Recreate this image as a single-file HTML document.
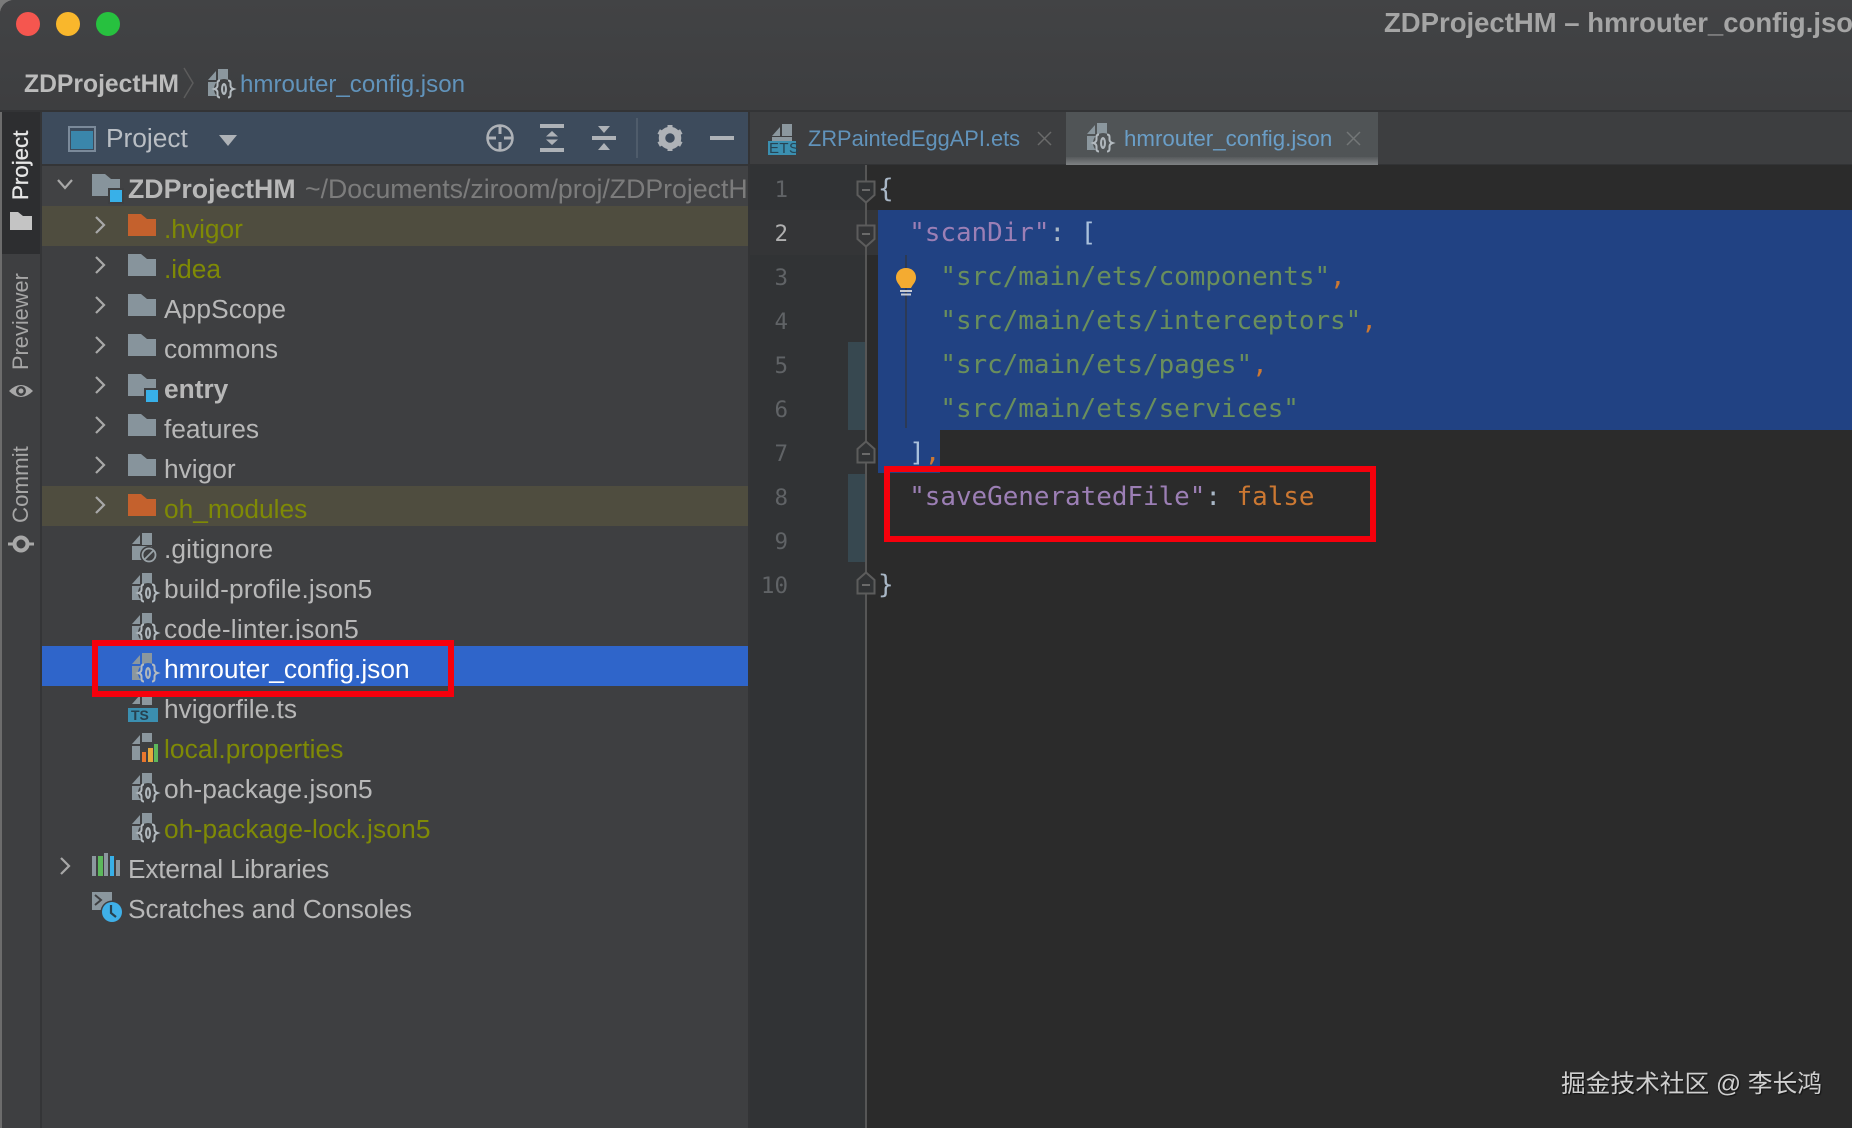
<!DOCTYPE html>
<html lang="zh">
<head>
<meta charset="utf-8">
<title>ZDProjectHM – hmrouter_config.json</title>
<style>
html,body{margin:0;padding:0;background:#7a7a7a;}
#w{position:relative;width:1852px;height:1128px;overflow:hidden;background:#3e3f41;border-top-left-radius:14px;font-family:"Liberation Sans","Noto Sans CJK SC",sans-serif;--bg:#3e3f41;}
#w div,#w svg{position:absolute;}
.r{left:164px;height:40px;line-height:47px;font-size:26.3px;color:#b8b8b8;white-space:pre;}
.o{color:#7f8a05;}
.hl{left:42px;width:706px;height:40px;background:#4f4d3f;}
.i{width:30px;height:32px;left:131px;}
.f{width:28px;height:22px;left:128px;}
.c{left:93px;width:14px;height:20px;margin-top:-1px;}
.n{left:748px;width:40px;height:44px;line-height:46px;font-family:"DejaVu Sans Mono",monospace;font-size:22.5px;color:#606366;text-align:right;}
.l{left:878px;height:44px;line-height:44px;font-family:"DejaVu Sans Mono",monospace;font-size:25.9px;color:#a9b7c6;white-space:pre;}
.k{color:#9c7fb5;}.s{color:#6a8f5c;}.p{color:#cc7832;}.b{color:#a9c0dc;}
.v{writing-mode:vertical-rl;transform:rotate(180deg);white-space:pre;color:#a0a0a0;font-size:22.3px;line-height:24px;width:24px;left:9px;text-align:center;}
</style>
</head>
<body>
<div id="w">
<svg width="0" height="0" style="left:0;top:0">
<defs>
<symbol id="folder" viewBox="0 0 28 22"><path d="M0 0H13L19 5H28V22H0Z" fill="currentColor"/></symbol>
<symbol id="chev" viewBox="0 0 14 20"><path d="M3 2L11 10L3 18" fill="none" stroke="#a8a8a8" stroke-width="2.2"/></symbol>
<symbol id="doc" viewBox="0 0 30 32"><path d="M1 12L9 3V12Z" fill="#8b979e"/><rect x="11" y="1" width="10" height="12" fill="#8b979e"/><rect x="1" y="14" width="20" height="14" fill="#8b979e"/></symbol>
<symbol id="json" viewBox="0 0 30 32"><use href="#doc" width="30" height="32"/><circle cx="17" cy="21" r="10" style="fill:var(--bg)"/><path d="M13 12.500q-2.500 0-2.500 2.500v2.500q0 2.500-3 3.500q3 1 3 3.500v2.500q0 2.500 2.500 2.500M21 12.500q2.500 0 2.500 2.500v2.500q0 2.500 3 3.500q-3 1-3 3.500v2.500q0 2.500-2.500 2.500" fill="none" stroke="#b4bbc0" stroke-width="2"/><ellipse cx="17" cy="21" rx="3" ry="6" fill="#b0b7bc"/><ellipse cx="17" cy="21" rx=".9" ry="3.500" style="fill:var(--bg)"/></symbol>
</defs>
</svg>

<!-- title bar -->
<div style="left:0;top:0;width:1852px;height:110px;background:linear-gradient(#424345,#3d3e40);"></div>
<div style="left:0;top:110px;width:1852px;height:2px;background:#333436;"></div>
<div style="left:16px;top:12px;width:24px;height:24px;border-radius:50%;background:#f5564f;"></div>
<div style="left:56px;top:12px;width:24px;height:24px;border-radius:50%;background:#f9b72c;"></div>
<div style="left:96px;top:12px;width:24px;height:24px;border-radius:50%;background:#27c13f;"></div>
<div style="left:1384px;top:5px;height:36px;line-height:36px;font-size:27.500px;font-weight:bold;color:#a5a5a5;white-space:pre;">ZDProjectHM – hmrouter_config.json</div>

<!-- breadcrumb -->
<div style="left:24px;top:66.500px;height:36px;line-height:36px;font-size:24.700px;font-weight:bold;color:#bcbcbc;white-space:pre;">ZDProjectHM</div>
<svg style="left:182px;top:66px" width="14" height="34"><path d="M2 2L11 17L2 32" fill="none" stroke="#5c5c5c" stroke-width="1.500"/></svg>
<svg class="i" style="left:207px;top:68px"><use href="#json" width="30" height="32"/></svg>
<div style="left:240px;top:66.500px;height:36px;line-height:36px;font-size:24.100px;color:#6193bb;white-space:pre;">hmrouter_config.json</div>

<!-- left strip -->
<div style="left:0;top:112px;width:2px;height:1016px;background:#6c6c6c;"></div>
<div style="left:2px;top:112px;width:39px;height:142px;background:#2d2e30;"></div>
<div style="left:40px;top:112px;width:2px;height:1016px;background:#343537;"></div>
<div class="v" style="top:130px;height:70px;color:#e6e6e6;-webkit-text-stroke:.3px #e6e6e6;">Project</div>
<svg style="left:10px;top:212px" width="22" height="18"><path d="M0 0H8L13 4H22V18H0Z" fill="#c4c4c4"/></svg>
<div class="v" style="top:273px;height:98px;color:#a6a6a6;font-size:21.800px;">Previewer</div>
<svg style="left:8px;top:382px" width="26" height="18"><path d="M1 9Q13-3 25 9Q13 21 1 9Z" fill="#a8a8a8"/><circle cx="13" cy="9" r="5" fill="#3e3f41"/><circle cx="13" cy="9" r="2.500" fill="#a8a8a8"/></svg>
<div class="v" style="top:445px;height:80px;color:#a6a6a6;">Commit</div>
<svg style="left:8px;top:534px" width="26" height="20"><path d="M0 10H26" stroke="#a8a8a8" stroke-width="3"/><circle cx="13" cy="10" r="6.500" fill="#3e3f41" stroke="#a8a8a8" stroke-width="4"/></svg>

<!-- project header -->
<div style="left:42px;top:112px;width:706px;height:52px;background:#3d4b5c;"></div>
<div style="left:42px;top:164px;width:706px;height:2px;background:#343537;"></div>
<svg style="left:68px;top:126px" width="28" height="26"><rect x="1" y="1" width="26" height="24" fill="none" stroke="#7b8a9a" stroke-width="2"/><rect x="3" y="5" width="22" height="18" fill="#3a86ab"/></svg>
<div style="left:106px;top:119px;height:38px;line-height:38px;font-size:26.300px;color:#b9bec4;">Project</div>
<svg style="left:219px;top:135px" width="18" height="11"><path d="M0 0H18L9 11Z" fill="#aeb2b7"/></svg>
<svg style="left:486px;top:124px" width="28" height="28"><circle cx="14" cy="14" r="12.500" fill="none" stroke="#aeb2b7" stroke-width="2.500"/><path d="M14 2V10M14 18V26M2 14H10M18 14H26" stroke="#aeb2b7" stroke-width="3"/></svg>
<svg style="left:540px;top:124px" width="24" height="28"><path d="M0 0H24V4H0ZM0 24H24V28H0Z" fill="#aeb2b7"/><path d="M12 7L18 12.500H6ZM12 21L6 15.500H18Z" fill="#aeb2b7"/></svg>
<svg style="left:592px;top:124px" width="24" height="28"><path d="M0 12H24V16H0Z" fill="#aeb2b7"/><path d="M6 2H18L12 9ZM6 26H18L12 19Z" fill="#aeb2b7"/></svg>
<div style="left:636px;top:118px;width:2px;height:40px;background:#4f5c6b;"></div>
<svg style="left:657px;top:125px" width="26" height="26" viewBox="-13 -13 26 26"><circle r="8" fill="none" stroke="#aeb2b7" stroke-width="6.500"/><path d="M0-9.500V-13M0 9.500V13M-8.200-4.800L-11.300-6.500M8.200 4.800L11.300 6.500M-8.200 4.800L-11.300 6.500M8.200-4.800L11.300-6.500" stroke="#aeb2b7" stroke-width="5"/></svg>
<div style="left:710px;top:136px;width:24px;height:4px;background:#aeb2b7;"></div>

<!-- tree highlights -->
<div style="left:42px;top:166px;width:706px;height:40px;background:#414244;"></div>
<div class="hl" style="top:206px;"></div>
<div class="hl" style="top:486px;"></div>
<div style="left:42px;top:646px;width:706px;height:40px;background:#2f65ca;"></div>
<div style="left:748px;top:112px;width:2px;height:1016px;background:#333436;"></div>

<!-- tree: root -->
<svg style="left:56px;top:178px" width="18" height="12"><path d="M2 2L9 10L16 2" fill="none" stroke="#a8a8a8" stroke-width="2.200"/></svg>
<svg class="f" style="left:92px;top:174px;color:#87949c"><use href="#folder" width="28" height="22"/></svg>
<div style="left:108px;top:188px;width:16px;height:16px;background:#3e3f41;"></div>
<div style="left:110px;top:190px;width:12px;height:12px;background:#38b0e8;"></div>
<div class="r" style="left:128px;top:166px;font-weight:bold;font-size:26.700px;">ZDProjectHM</div>
<div class="r" style="left:305px;top:166px;width:443px;overflow:hidden;color:#7c7c7c;font-size:26.700px;">~/Documents/ziroom/proj/ZDProjectHM</div>

<!-- folders -->
<svg class="c" style="top:216px"><use href="#chev" width="14" height="20"/></svg>
<svg class="f" style="top:214px;color:#c4612d"><use href="#folder" width="28" height="22"/></svg>
<div class="r o" style="top:206px;">.hvigor</div>
<svg class="c" style="top:256px"><use href="#chev" width="14" height="20"/></svg>
<svg class="f" style="top:254px;color:#87949c"><use href="#folder" width="28" height="22"/></svg>
<div class="r o" style="top:246px;">.idea</div>
<svg class="c" style="top:296px"><use href="#chev" width="14" height="20"/></svg>
<svg class="f" style="top:294px;color:#87949c"><use href="#folder" width="28" height="22"/></svg>
<div class="r" style="top:286px;letter-spacing:.1px;">AppScope</div>
<svg class="c" style="top:336px"><use href="#chev" width="14" height="20"/></svg>
<svg class="f" style="top:334px;color:#87949c"><use href="#folder" width="28" height="22"/></svg>
<div class="r" style="top:326px;">commons</div>
<svg class="c" style="top:376px"><use href="#chev" width="14" height="20"/></svg>
<svg class="f" style="top:374px;color:#87949c"><use href="#folder" width="28" height="22"/></svg>
<div style="left:144px;top:388px;width:16px;height:16px;background:#3e3f41;"></div>
<div style="left:146px;top:390px;width:12px;height:12px;background:#38b0e8;"></div>
<div class="r" style="top:366px;font-weight:bold;">entry</div>
<svg class="c" style="top:416px"><use href="#chev" width="14" height="20"/></svg>
<svg class="f" style="top:414px;color:#87949c"><use href="#folder" width="28" height="22"/></svg>
<div class="r" style="top:406px;">features</div>
<svg class="c" style="top:456px"><use href="#chev" width="14" height="20"/></svg>
<svg class="f" style="top:454px;color:#87949c"><use href="#folder" width="28" height="22"/></svg>
<div class="r" style="top:446px;">hvigor</div>
<svg class="c" style="top:496px"><use href="#chev" width="14" height="20"/></svg>
<svg class="f" style="top:494px;color:#c4612d"><use href="#folder" width="28" height="22"/></svg>
<div class="r o" style="top:486px;">oh_modules</div>

<!-- files -->
<svg class="i" style="top:532px"><use href="#doc" width="30" height="32"/><circle cx="18" cy="23" r="9" style="fill:var(--bg)"/><circle cx="18" cy="23" r="6.500" fill="none" stroke="#9aa3a8" stroke-width="1.800"/><path d="M14 27L22 19" stroke="#9aa3a8" stroke-width="1.800"/></svg>
<div class="r" style="top:526px;letter-spacing:.1px;">.gitignore</div>
<svg class="i" style="top:572px"><use href="#json" width="30" height="32"/></svg>
<div class="r" style="top:566px;letter-spacing:.12px;">build-profile.json5</div>
<svg class="i" style="top:612px"><use href="#json" width="30" height="32"/></svg>
<div class="r" style="top:606px;letter-spacing:.2px;">code-linter.json5</div>
<svg class="i" style="top:652px;--bg:#2f65ca"><use href="#json" width="30" height="32"/></svg>
<div class="r" style="top:646px;color:#fff;">hmrouter_config.json</div>
<svg class="i" style="top:692px"><use href="#doc" width="30" height="32"/></svg>
<div style="left:128px;top:706px;width:30px;height:16px;background:#3e3f41;"></div>
<div style="left:128px;top:708px;width:30px;height:14px;background:#3b8fb0;"></div>
<div style="left:131px;top:708px;height:14px;line-height:15px;font-size:14px;font-weight:bold;color:#27414f;">TS</div>
<div class="r" style="top:686px;">hvigorfile.ts</div>
<svg class="i" style="top:732px"><use href="#doc" width="30" height="32"/></svg>
<div style="left:140px;top:742px;width:20px;height:22px;background:#3e3f41;"></div>
<div style="left:142px;top:752px;width:4px;height:10px;background:#e8762d;"></div>
<div style="left:148px;top:748px;width:5px;height:14px;background:#e6a83c;"></div>
<div style="left:154px;top:744px;width:4px;height:18px;background:#5cb85c;"></div>
<div class="r o" style="top:726px;letter-spacing:.07px;">local.properties</div>
<svg class="i" style="top:772px"><use href="#json" width="30" height="32"/></svg>
<div class="r" style="top:766px;letter-spacing:.07px;">oh-package.json5</div>
<svg class="i" style="top:812px"><use href="#json" width="30" height="32"/></svg>
<div class="r o" style="top:806px;letter-spacing:.17px;">oh-package-lock.json5</div>

<!-- external libraries -->
<svg class="c" style="left:58px;top:857px"><use href="#chev" width="14" height="20"/></svg>
<svg style="left:92px;top:853px" width="28" height="23"><rect x="0" y="3" width="4" height="20" fill="#8b979e"/><rect x="6" y="3" width="5" height="20" fill="#5cb85c"/><rect x="12" y="0" width="4" height="23" fill="#8b979e"/><rect x="18" y="3" width="4" height="20" fill="#38b0e8"/><rect x="24" y="7" width="4" height="16" fill="#8b979e"/></svg>
<div class="r" style="left:128px;top:846px;letter-spacing:-.2px;">External Libraries</div>
<svg style="left:92px;top:892px" width="32" height="32"><rect width="20" height="18" fill="#8b979e"/><path d="M3 3L9 8L3 13" fill="none" stroke="#3e3f41" stroke-width="2"/><circle cx="20" cy="20" r="11.500" fill="#3e3f41"/><circle cx="20" cy="20" r="10" fill="#3fb0e8"/><path d="M19 13V21L24 25" fill="none" stroke="#27414f" stroke-width="2.200"/></svg>
<div class="r" style="left:128px;top:886px;letter-spacing:-.05px;">Scratches and Consoles</div>

<!-- tabs -->
<div style="left:750px;top:112px;width:1102px;height:52px;background:#3d3e40;"></div>
<div style="left:750px;top:164px;width:1102px;height:2px;background:#323335;"></div>
<svg style="left:768px;top:122px" width="28" height="33"><path d="M4 14L12 5V14Z" fill="#8b979e"/><rect x="14" y="2" width="10" height="12" fill="#8b979e"/><rect x="4" y="15" width="20" height="4" fill="#8b979e"/><rect x="0" y="19" width="28" height="14" fill="#3b8fb0"/></svg>
<div style="left:769px;top:141px;height:14px;line-height:15px;font-size:15px;color:#264454;letter-spacing:.4px;">ETS</div>
<div style="left:808px;top:120px;height:38px;line-height:38px;font-size:21.800px;color:#6193bb;white-space:pre;">ZRPaintedEggAPI.ets</div>
<svg style="left:1037px;top:131px" width="15" height="15"><path d="M1 1L14 14M14 1L1 14" stroke="#6a6a6a" stroke-width="1.500"/></svg>
<div style="left:1066px;top:112px;width:312px;height:53px;background:#505456;--bg:#505456;"></div>
<div style="left:1066px;top:157px;width:312px;height:8px;background:linear-gradient(#565a5c,#7e8183);"></div>
<svg class="i" style="left:1086px;top:122px;--bg:#505456"><use href="#json" width="30" height="32"/></svg>
<div style="left:1124px;top:120px;height:38px;line-height:38px;font-size:22.300px;color:#6a9ec7;white-space:pre;">hmrouter_config.json</div>
<svg style="left:1346px;top:131px" width="15" height="15"><path d="M1 1L14 14M14 1L1 14" stroke="#737677" stroke-width="1.500"/></svg>

<!-- editor -->
<div style="left:750px;top:165px;width:115px;height:963px;background:#313335;"></div>
<div style="left:865px;top:165px;width:987px;height:963px;background:#2b2b2b;"></div>
<div style="left:750px;top:210px;width:128px;height:45px;background:#343537;"></div>
<div style="left:848px;top:342px;width:17px;height:88px;background:#374850;"></div>
<div style="left:848px;top:474px;width:17px;height:88px;background:#374850;"></div>
<div style="left:878px;top:210px;width:974px;height:220px;background:#214283;"></div>
<div style="left:878px;top:430px;width:62px;height:43px;background:#214283;"></div>
<div style="left:865px;top:165px;width:2px;height:963px;background:#565656;"></div>
<div style="left:905px;top:255px;width:2px;height:173px;background:#2c3a55;"></div>

<!-- fold markers -->
<svg style="left:856px;top:180px" width="20" height="24"><path d="M1.500 1.500H18.500V15L10 22.500L1.500 15Z" fill="#313335" stroke="#5c5c5c" stroke-width="2"/><path d="M6 10H14" stroke="#6a6a6a" stroke-width="2"/></svg>
<svg style="left:856px;top:224px" width="20" height="24"><path d="M1.500 1.500H18.500V15L10 22.500L1.500 15Z" fill="#343537" stroke="#5c5c5c" stroke-width="2"/><path d="M6 10H14" stroke="#6a6a6a" stroke-width="2"/></svg>
<svg style="left:856px;top:440px" width="20" height="24"><path d="M1.500 22.500H18.500V9L10 1.500L1.500 9Z" fill="#313335" stroke="#5c5c5c" stroke-width="2"/><path d="M6 14H14" stroke="#6a6a6a" stroke-width="2"/></svg>
<svg style="left:856px;top:571px" width="20" height="24"><path d="M1.500 22.500H18.500V9L10 1.500L1.500 9Z" fill="#313335" stroke="#5c5c5c" stroke-width="2"/><path d="M6 14H14" stroke="#6a6a6a" stroke-width="2"/></svg>

<!-- bulb -->
<svg style="left:895px;top:267px" width="22" height="31"><path d="M11 1C5 1 1 5 1 10.500C1 15 4 17 6 21H16C18 17 21 15 21 10.500C21 5 17 1 11 1Z" fill="#f4ab31"/><path d="M5 24H17M6 27.500H16" stroke="#c8ccd4" stroke-width="2"/></svg>

<!-- line numbers -->
<div class="n" style="top:167px;">1</div>
<div class="n" style="top:211px;color:#b0b0b0;">2</div>
<div class="n" style="top:255px;">3</div>
<div class="n" style="top:299px;">4</div>
<div class="n" style="top:343px;">5</div>
<div class="n" style="top:387px;">6</div>
<div class="n" style="top:431px;">7</div>
<div class="n" style="top:475px;">8</div>
<div class="n" style="top:519px;">9</div>
<div class="n" style="top:563px;">10</div>

<!-- code -->
<div class="l" style="top:167px;">{</div>
<div class="l" style="top:211px;">  <span class="k">"scanDir"</span>: <span class="b">[</span></div>
<div class="l" style="top:255px;">    <span class="s">"src/main/ets/components"</span><span class="p">,</span></div>
<div class="l" style="top:299px;">    <span class="s">"src/main/ets/interceptors"</span><span class="p">,</span></div>
<div class="l" style="top:343px;">    <span class="s">"src/main/ets/pages"</span><span class="p">,</span></div>
<div class="l" style="top:387px;">    <span class="s">"src/main/ets/services"</span></div>
<div class="l" style="top:431px;">  <span class="b">]</span><span class="p">,</span></div>
<div class="l" style="top:475px;">  <span class="k">"saveGeneratedFile"</span>: <span class="p">false</span></div>
<div class="l" style="top:563px;">}</div>

<!-- red boxes -->
<div style="left:92px;top:640px;width:350px;height:45px;border:6px solid #f6000c;"></div>
<div style="left:884px;top:466px;width:480px;height:64px;border:6px solid #f6000c;"></div>

<!-- watermark -->
<div style="left:1561px;top:1067px;height:36px;line-height:36px;font-size:24.700px;color:#cfcfcf;white-space:pre;text-shadow:1px 1px 1px #111;font-family:'Liberation Sans','Noto Sans CJK SC',sans-serif;">掘金技术社区 @ 李长鸿</div>
</div>
</body>
</html>
